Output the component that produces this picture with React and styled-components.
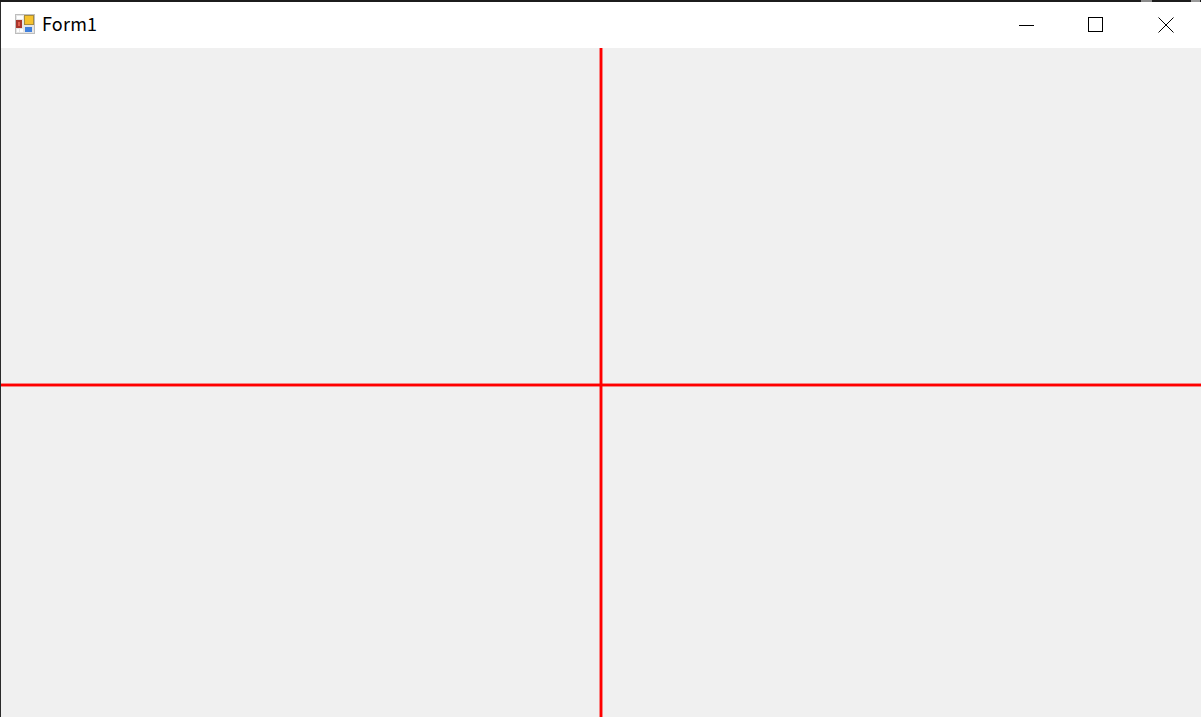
import React from 'react';
import styled, { createGlobalStyle } from 'styled-components';

const GlobalStyle = createGlobalStyle`
  html, body {
    margin: 0;
    padding: 0;
    background: #f0f0f0;
  }
`;

const Screen = styled.div`
  width: 1201px;
  height: 717px;
  overflow: hidden;
  display: flex;
  flex-direction: column;
`;

const TopEdge = styled.div`
  height: 2px;
  flex: none;
  background: linear-gradient(
    to right,
    #1c1c1c 1141px,
    #8a8a8a 1141px,
    #8a8a8a 1152px,
    #1c1c1c 1152px,
    #1c1c1c 1191px,
    #9a9a9a 1191px,
    #9a9a9a 1200px,
    #1c1c1c 1200px
  );
`;

const Window = styled.div`
  flex: 1;
  display: flex;
  flex-direction: column;
  border-left: 1px solid #2a2a2a;
  min-height: 0;
`;

const TitleBar = styled.div`
  height: 46px;
  flex: none;
  background: #ffffff;
  display: flex;
  align-items: center;
  padding-left: 14px;
`;

const AppIcon = styled.svg`
  width: 20px;
  height: 20px;
  flex: none;
  margin-bottom: 2px;
  filter: blur(0.4px);
`;

const Title = styled.span`
  margin-left: 7px;
  margin-bottom: 4px;
  font-family: 'Noto Sans CJK SC', 'Noto Sans', sans-serif;
  font-size: 18px;
  letter-spacing: 0.2px;
  line-height: 24px;
  color: #000000;
`;

const Controls = styled.div`
  margin-left: auto;
  display: flex;
  height: 100%;
`;

const ControlButton = styled.div`
  width: 70px;
  display: flex;
  align-items: center;
  justify-content: center;
`;

const ControlIcon = styled.svg`
  width: 16px;
  height: 16px;
  margin-bottom: 1px;
  fill: none;
  stroke: #000000;
  stroke-width: 1;
`;

const Canvas = styled.div`
  flex: 1;
  display: grid;
  grid-template-columns: 599px 2px 1fr;
  grid-template-rows: 336px 2px 1fr;
  background: #f0f0f0;
  overflow: hidden;
`;

const VerticalLine = styled.div`
  grid-column: 2;
  grid-row: 1 / 4;
  background: #ff0000;
  box-shadow: 0 0 0 1px rgba(255, 0, 0, 0.45);
`;

const HorizontalLine = styled.div`
  grid-column: 1 / 4;
  grid-row: 2;
  background: #ff0000;
  box-shadow: 0 0 0 1px rgba(255, 0, 0, 0.45);
`;

function App() {
  return (
    <Screen>
      <GlobalStyle />
      <TopEdge />
      <Window>
        <TitleBar>
          <AppIcon viewBox="0 0 20 20">
            <rect x="0" y="0" width="20" height="20" fill="#bdbdbd" />
            <rect x="1" y="1" width="18" height="18" fill="#e6e6e6" />
            <rect x="2" y="2" width="6" height="3" fill="#ffffff" />
            <rect x="1" y="6" width="6" height="8" fill="#a8352c" />
            <rect x="3" y="8" width="2" height="4" fill="#e0604f" />
            <rect x="9" y="1" width="10" height="10" fill="#a88c3a" />
            <rect x="10" y="2" width="8" height="8" fill="#f6c22e" />
            <rect x="10" y="13" width="7" height="5" fill="#3f7fdc" />
            <rect x="2" y="15" width="2" height="3" fill="#ffffff" />
            <rect x="5" y="15" width="3" height="3" fill="#ffffff" />
          </AppIcon>
          <Title>Form1</Title>
          <Controls>
            <ControlButton>
              <ControlIcon viewBox="0 0 16 16">
                <path d="M1 8.5H16" />
              </ControlIcon>
            </ControlButton>
            <ControlButton>
              <ControlIcon viewBox="0 0 16 16">
                <rect x="0.5" y="0.5" width="14" height="14" />
              </ControlIcon>
            </ControlButton>
            <ControlButton>
              <ControlIcon viewBox="0 0 16 16">
                <path d="M0.5 0.5L15.5 15.5M15.5 0.5L0.5 15.5" />
              </ControlIcon>
            </ControlButton>
          </Controls>
        </TitleBar>
        <Canvas>
          <VerticalLine />
          <HorizontalLine />
        </Canvas>
      </Window>
    </Screen>
  );
}

export default App;
